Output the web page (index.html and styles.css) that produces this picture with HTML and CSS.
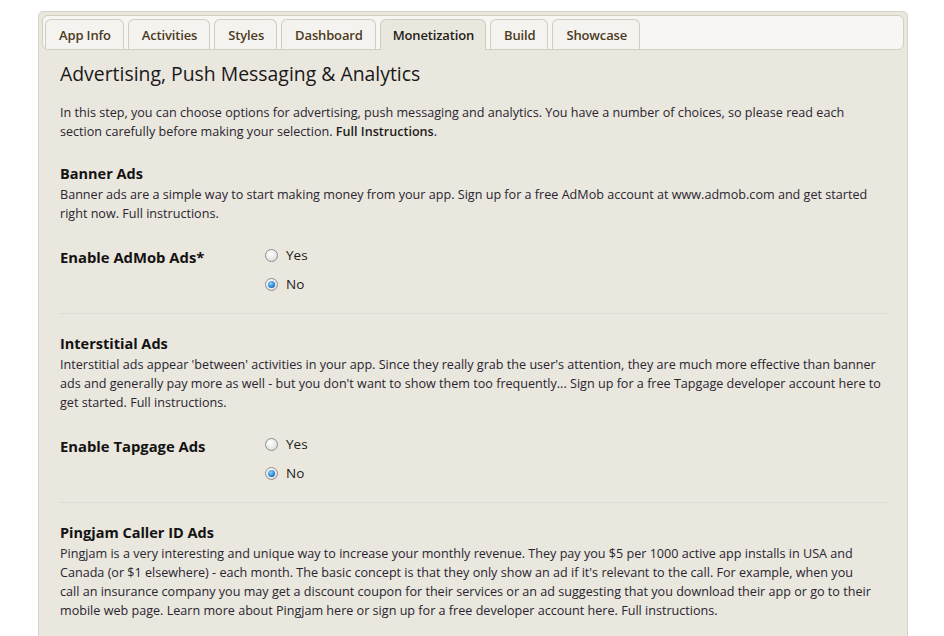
FILE: index.html
```html
<!DOCTYPE html>
<html>
<head>
<meta charset="utf-8">
<link rel="stylesheet" href="styles.css">
</head>
<body>
<div class="panel">
  <div class="tabbar">
    <div class="tab">App Info</div>
    <div class="tab">Activities</div>
    <div class="tab">Styles</div>
    <div class="tab">Dashboard</div>
    <div class="tab active">Monetization</div>
    <div class="tab">Build</div>
    <div class="tab">Showcase</div>
  </div>
  <div class="content">
    <h1 class="title">Advertising, Push Messaging &amp; Analytics</h1>
    <p class="intro">In this step, you can choose options for advertising, push messaging and analytics. You have a number of choices, so please read each section carefully before making your selection. <b class="strong">Full Instructions</b>.</p>

    <section class="section">
      <h2 class="sec-title">Banner Ads</h2>
      <p class="desc">Banner ads are a simple way to start making money from your app. Sign up for a free AdMob account at www.admob.com and get started right now. Full instructions.</p>
      <div class="field">
        <div class="field-label">Enable AdMob Ads*</div>
        <div class="options">
          <label class="opt"><input type="radio" name="admob" class="radio"> Yes</label>
          <label class="opt"><input type="radio" name="admob" class="radio" checked> No</label>
        </div>
      </div>
    </section>

    <section class="section">
      <h2 class="sec-title">Interstitial Ads</h2>
      <p class="desc">Interstitial ads appear 'between' activities in your app. Since they really grab the user's attention, they are much more effective than banner ads and generally pay more as well - but you don't want to show them too frequently... Sign up for a free Tapgage developer account here to get started. Full instructions.</p>
      <div class="field">
        <div class="field-label">Enable Tapgage Ads</div>
        <div class="options">
          <label class="opt"><input type="radio" name="tap" class="radio"> Yes</label>
          <label class="opt"><input type="radio" name="tap" class="radio" checked> No</label>
        </div>
      </div>
    </section>

    <section class="section last">
      <h2 class="sec-title">Pingjam Caller ID Ads</h2>
      <p class="desc">Pingjam is a very interesting and unique way to increase your monthly revenue. They pay you $5 per 1000 active app installs in USA and Canada (or $1 elsewhere) - each month. The basic concept is that they only show an ad if it's relevant to the call. For example, when you call&nbsp;an insurance company you may get a discount coupon for their services or an ad suggesting that you download their app or go to their mobile web page. Learn more about Pingjam here or sign up for a free developer account here. Full instructions.</p>
    </section>
  </div>
</div>
</body>
</html>
```
FILE: styles.css
```css
html, body {
  margin: 0;
  padding: 0;
  background: #ffffff;
}
body {
  font-family: "Open Sans", "DejaVu Sans", sans-serif;
  color: #2a2530;
  overflow: hidden;
  height: 636px;
}
.panel {
  margin: 11px 0 0 38px;
  width: 862px;
  height: 700px;
  border: 1px solid #d8d4c6;
  border-radius: 5px;
  background: #e9e7de;
  padding: 3px;
}
.tabbar {
  display: flex;
  align-items: flex-end;
  gap: 4px;
  height: 30px;
  padding: 3px 0 0 2px;
  border: 1px solid #d2cec1;
  border-radius: 6px;
  background: #f7f6f3;
}
.tab {
  height: 29px;
  line-height: 30px;
  padding: 0 12px 0 13px;
  border: 1px solid #d0ccbf;
  border-bottom: none;
  border-radius: 6px 6px 0 0;
  background: #f4f3ef;
  font-size: 13px;
  font-weight: 600;
  color: #4d3a1e;
  letter-spacing: -0.15px;
}
.tab.active {
  height: 30px;
  padding: 0 11px 0 12px;
  background: #e9e7de;
  color: #1f1d1a;
  margin-bottom: -1px;
}
.content {
  padding: 0 16px 0 18px;
}
.title {
  margin: 0;
  padding-top: 12px;
  font-size: 19.4px;
  font-weight: 400;
  line-height: 24px;
  color: #1a1818;
}
.intro {
  margin: 17px 0 3px;
  font-size: 12.6px;
  line-height: 19px;
}
.strong {
  font-weight: 600;
  color: #1f1d1a;
}
.section {
  padding: 19px 0 18px;
  border-bottom: 1px solid #dcdcd6;
}
.section.last {
  border-bottom: none;
}
.sec-title {
  margin: 0;
  font-size: 14.5px;
  font-weight: 700;
  line-height: 22px;
  color: #141212;
}
.desc {
  margin: 0;
  font-size: 12.6px;
  line-height: 19px;
}
.field {
  display: flex;
  margin-top: 21px;
}
.field-label {
  width: 205px;
  padding-top: 2px;
  font-size: 14.8px;
  font-weight: 700;
  color: #141212;
  line-height: 22px;
}
.options {
  display: flex;
  flex-direction: column;
  gap: 7px;
}
.opt {
  display: flex;
  align-items: center;
  gap: 8px;
  font-size: 13.5px;
  line-height: 22px;
  color: #1f1d1a;
}
.radio {
  appearance: none;
  -webkit-appearance: none;
  margin: 0;
  width: 13px;
  height: 13px;
  border-radius: 50%;
  border: 1px solid #8f8f8f;
  background: radial-gradient(circle at 40% 35%, #ffffff 0%, #e6e6e6 60%, #cfcfcf 100%);
  position: relative;
}
.radio:checked::after {
  content: "";
  position: absolute;
  left: 2px;
  top: 2px;
  width: 7px;
  height: 7px;
  border-radius: 50%;
  background: radial-gradient(circle at 40% 35%, #8fd3ff 0%, #2a8ad6 55%, #0b4f8a 100%);
}
```
